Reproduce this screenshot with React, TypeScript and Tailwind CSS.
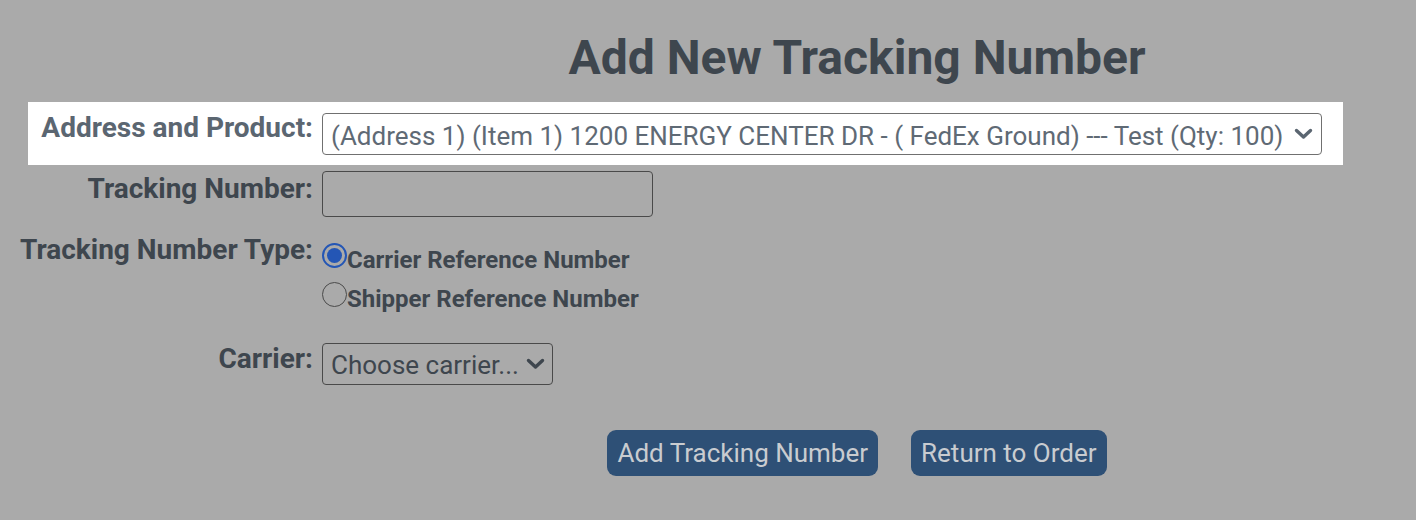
import React from "react";

function Chevron({ color }: { color: string }) {
  return (
    <svg width="19" height="12" viewBox="0 0 19 12" fill="none">
      <path d="M2.5 2.5 L9.5 9 L16.5 2.5" stroke={color} strokeWidth="3.4" strokeLinecap="round" strokeLinejoin="round" />
    </svg>
  );
}

function Radio({ checked }: { checked: boolean }) {
  return checked ? (
    <div className="w-[25px] h-[25px] rounded-full border-2 border-[#2456b5] flex items-center justify-center shrink-0">
      <div className="w-[15px] h-[15px] rounded-full bg-[#2456b5]" />
    </div>
  ) : (
    <div className="w-[25px] h-[25px] rounded-full border-[1.5px] border-[#4a4a4a] shrink-0" />
  );
}

export default function App() {
  return (
    <div className="w-[1416px] h-[520px] bg-[#aaaaaa] overflow-hidden font-['Roboto',sans-serif] text-[#3e464e]">
      <h1 className="pl-[298px] pt-[32px] text-center text-[48px] font-bold leading-[52px]">
        Add New Tracking Number
      </h1>

      {/* Highlighted row */}
      <div className="mt-[18px] ml-[28px] w-[1315px] h-[63px] bg-white flex items-start gap-[9px] pt-[11px]">
        <div className="w-[285px] mt-0 text-right text-[28px] font-bold leading-[30px] text-[#5b6671] whitespace-nowrap">
          Address and Product:
        </div>
        <div className="w-[1000px] h-[42px] border border-[#707070] rounded-[4px] flex items-center justify-between pl-[8px] pr-[8px]">
          <span className="pt-[3px] text-[26px] leading-[30px] text-[#5f6a75] whitespace-nowrap">
            (Address 1) (Item 1) 1200 ENERGY CENTER DR - ( FedEx Ground) --- Test (Qty: 100)
          </span>
          <Chevron color="#5b6671" />
        </div>
      </div>

      {/* Tracking number */}
      <div className="mt-[6px] flex items-start gap-[9px]">
        <div className="w-[313px] mt-[3px] text-right text-[28px] font-bold leading-[30px] whitespace-nowrap">
          Tracking Number:
        </div>
        <div className="w-[331px] h-[46px] border-[1.5px] border-[#4a4a4a] rounded-[4px]" />
      </div>

      {/* Tracking number type */}
      <div className="mt-[18px] flex items-start gap-[9px]">
        <div className="w-[313px] text-right text-[28px] font-bold leading-[30px] whitespace-nowrap">
          Tracking Number Type:
        </div>
        <div className="mt-[8px] flex flex-col">
          <div className="h-[39px] flex items-start">
            <Radio checked />
            <span className="mt-[4px] text-[24px] font-bold leading-[26px] whitespace-nowrap">Carrier Reference Number</span>
          </div>
          <div className="h-[39px] flex items-start">
            <Radio checked={false} />
            <span className="mt-[4px] text-[24px] font-bold leading-[26px] whitespace-nowrap">Shipper Reference Number</span>
          </div>
        </div>
      </div>

      {/* Carrier */}
      <div className="mt-[21px] flex items-start gap-[9px]">
        <div className="w-[313px] mt-[2px] text-right text-[28px] font-bold leading-[30px] whitespace-nowrap">
          Carrier:
        </div>
        <div className="mt-[1px] w-[231px] h-[42px] border-[1.5px] border-[#4a4a4a] rounded-[4px] flex items-center justify-between pl-[8px] pr-[7px]">
          <span className="pt-[2px] text-[26px] leading-[30px] whitespace-nowrap">Choose carrier...</span>
          <Chevron color="#3e464e" />
        </div>
      </div>

      {/* Buttons */}
      <div className="mt-[45px] pl-[298px] flex justify-center gap-[33px]">
        <button className="h-[46px] px-[10px] rounded-[9px] bg-[#2e5076] text-[#c9ccd0] text-[26px] leading-[30px] whitespace-nowrap">
          Add Tracking Number
        </button>
        <button className="h-[46px] px-[10px] rounded-[9px] bg-[#2e5076] text-[#c9ccd0] text-[26px] leading-[30px] whitespace-nowrap">
          Return to Order
        </button>
      </div>
    </div>
  );
}
